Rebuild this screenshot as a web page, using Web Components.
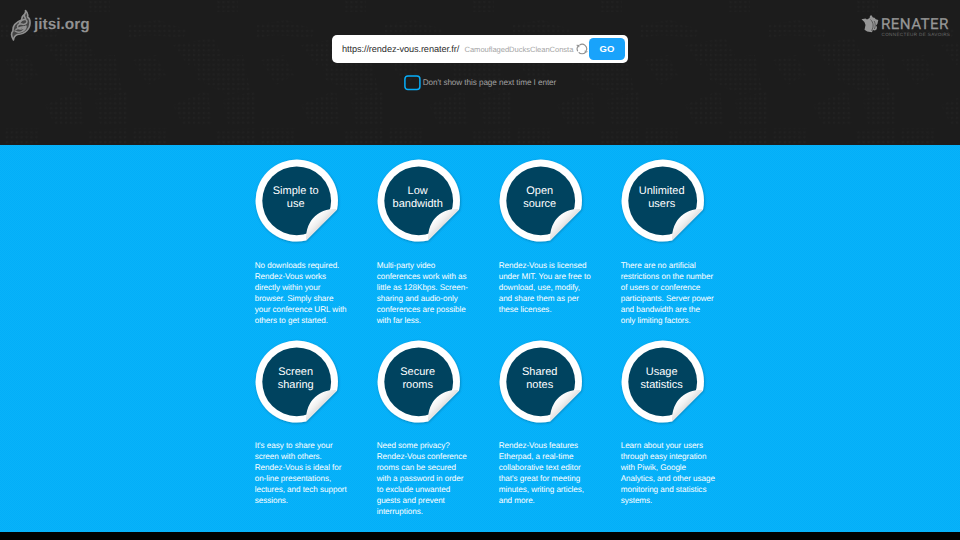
<!DOCTYPE html>
<html lang="en"><head><meta charset="utf-8"><title>Rendez-Vous</title>
<style>html,body{margin:0;height:540px;overflow:hidden;background:#000;text-rendering:geometricPrecision}</style></head>
<body>
<welcome-page></welcome-page>
<script>
const define=(name,html,setup)=>customElements.define(name,class extends HTMLElement{
  connectedCallback(){
    if(this.shadowRoot)return;
    const t=document.createElement('template');t.innerHTML=html;
    this.attachShadow({mode:'open'}).append(t.content.cloneNode(true));
    if(setup)setup.call(this);
  }
});

define('jitsi-logo',`<style>:host{display:flex;align-items:flex-start;color:#919191}svg{display:block;margin-top:0}span{font:bold 15.4px/20px "Liberation Sans",sans-serif;margin:6px 0 0 2.500px;white-space:nowrap}</style>
<svg width="22" height="32" viewBox="0 0 22 32" fill="none" stroke="#919191" stroke-linecap="round" stroke-linejoin="round">
<path d="M15.500 1.500c.8 3-1.500 4-3 6-.8 1.500-.5 2.500-1 3.500-5 2-9 6-8.500 11-2 2-2 5 .5 9 .3-3 1-4.500 4-5.500 8-.5 13-6 12.500-12.500 0-2-1-4-2.500-5 .8-2.500.2-4.500-2-6.500z" fill="#454545" stroke-width="1.600"/>
<path d="M9.500 14c3-5 7.500-4 7.500-1.500s-3 3.500-5.500 2.500c-3-.5-5 2-3.500 4s6 1 8-2M14.500 6c-1 2 2 3 1 4.500M5 22c4 3 10 0 11-4-4-1-7 1-10 2.500" stroke-width="1.500"/></svg><span>jitsi.org</span>`);

define('renater-logo',`<style>:host{display:grid;grid-template-columns:20.500px 69px;color:#969696}svg{display:block}div{padding-top:2.500px}b{display:block;font:400 15.200px/15px Roboto,"Liberation Sans",sans-serif;letter-spacing:.4px;-webkit-text-stroke:.25px #969696}small{display:block;font:4.600px/5px "Liberation Sans",sans-serif;letter-spacing:.35px;white-space:nowrap;color:#6a6a6a;margin:0 0 0 .5px}</style>
<svg width="18" height="18" viewBox="0 0 18 18"><path d="M.5 4.200L4.500 3.600 6 4.600 8.600 3 9 .8l1.500-.5 1.400 2.200 1.600.3 1.300 1.400 2.500.8-.9 4-1.400 1.500 1 1.400-.3 2.300-1.700 1.200-2.200-.4-.8 2.200-4.800-.8-2.700-1.700L4.500 10 3.400 7z" fill="#969696"/><path d="M9.500 4.500c3 3 3.500 7 1 11.300M13.200 6c1.400 3 1.400 5 .2 8" fill="none" stroke="#404040" stroke-width=".7"/></svg>
<div><b>RENATER</b><small>CONNECTEUR DE SAVOIRS</small></div>`);

define('room-form',`<style>:host{display:flex;box-sizing:border-box;width:296px;height:27.500px;background:#fff;border-radius:5px;padding:3px 3px 0 10px;align-items:flex-start;font-family:"Liberation Sans",sans-serif;white-space:nowrap}
.url{font-size:9.200px;letter-spacing:-.09px;line-height:23px;color:#2c2c2c;width:122.500px}.room{font-size:7.600px;letter-spacing:-.05px;line-height:24px;color:#a5a5a5;width:111px}svg{display:block;margin:5px 0 0 0}button{display:block;margin:0 0 0 auto;padding:0;border:0;width:36px;height:22px;border-radius:4.500px;background:#19a3fb;color:#fff;font:bold 9.500px/22px "Liberation Sans",sans-serif}</style>
<span class="url">https://rendez-vous.renater.fr/</span><span class="room">CamouflagedDucksCleanConsta</span>
<svg width="12" height="12" viewBox="0 0 12 12" fill="none" stroke="#8f8f8f" stroke-width="1.150"><path d="M1.700 8.200A4.700 4.700 0 0 1 2.500 2.700M3.600 1.900A4.700 4.700 0 0 1 10.300 7.800M9.500 9.300A4.700 4.700 0 0 1 2.700 9.300"/><path d="M.6 2.200L2.900 2.400 2.700 4.300M11.400 8.500L9.400 9.200 9.200 7.500"/></svg><button>GO</button>`);

define('skip-option',`<style>:host{display:flex;align-items:center;gap:2px;font:8.200px/15px "Liberation Sans",sans-serif;letter-spacing:-.088px;color:#a0a0a0;white-space:nowrap}svg{display:block}</style><svg width="17" height="16"><rect x=".9" y=".9" width="15" height="13.700" rx="3" fill="none" stroke="#07aefa" stroke-width="1.500"/></svg><span><slot></slot></span>`);

define('page-header',`<style>:host{display:grid;grid-template-columns:1fr 296px 1fr;height:145px;background:#1c1c1c;position:relative;box-sizing:border-box}
.map{position:absolute;inset:0;z-index:0}jitsi-logo{margin:9px 0 0 9.500px;z-index:1}renater-logo{justify-self:end;margin:14.500px 10px 0 0;z-index:1}.mid{display:flex;flex-direction:column;align-items:center;padding-top:35px;gap:12px;z-index:1}</style>
<svg class="map" width="960" height="145"><defs><pattern id="d" width="4.920" height="4.830" patternUnits="userSpaceOnUse"><circle cx="2" cy="2" r="1.200" fill="#202020"/></pattern>
<pattern id="m" width="128" height="145" patternUnits="userSpaceOnUse"><path fill="url(#d)" d="M0 25L30 20 60 30 55 38 20 35 0 38zM45 45L85 38 95 55 60 65zM65 60L115 55 122 90 100 95 70 80zM88 0H110V12H88zM5 60L28 55 38 75 20 85zM45 105L80 90 84 125 55 125zM95 100L128 90V125H100zM88 130L128 128V145H88zM5 128H40V145H5z"/></pattern></defs>
<rect width="960" height="145" fill="url(#m)"/></svg>
<jitsi-logo></jitsi-logo><div class="mid"><room-form></room-form><skip-option>Don't show this page next time I enter</skip-option></div><renater-logo></renater-logo>`);

define('feature-card',`<style>:host{display:block;color:#fff;font-family:"Liberation Sans",sans-serif}
.badge{display:grid;width:86px;height:86px}.badge>*{grid-area:1/1}svg{display:block;overflow:visible}h2{margin:25.200px 4px 0 0;font:11px/13px "Liberation Sans",sans-serif;text-align:center;white-space:pre;z-index:1}p{margin:13.500px 0 0;font-size:8.200px;letter-spacing:-.085px;line-height:11px;white-space:pre}</style>
<div class="badge"><svg width="86" height="86" viewBox="0 .5 86 86"><defs><linearGradient id="g" gradientUnits="userSpaceOnUse" x1="56" y1="54" x2="67" y2="65"><stop offset=".3" stop-color="#fff"/><stop offset=".7" stop-color="#f1f1f1"/><stop offset="1" stop-color="#e0e0e0"/></linearGradient><filter id="s" x="-10%" y="-10%" width="125%" height="125%"><feDropShadow dx=".6" dy=".8" stdDeviation=".8" flood-color="#034a70" flood-opacity=".45"/></filter></defs>
<path filter="url(#s)" d="M51 81A41.200 41 0 1 1 82 49.900z" fill="#fff"/><circle cx="41.700" cy="41.300" r="34.400" fill="#00435f"/><path d="M82.100 49.800C71 47.500 50 55.500 51 81.100z" fill="url(#g)"/></svg><h2><slot name="title"></slot></h2></div><p><slot></slot></p>`);

define('feature-grid',`<style>:host{display:grid;box-sizing:border-box;height:387px;padding:15px 0 0 254.700px;grid-template-columns:repeat(4,122px);grid-template-rows:180.500px 1fr;background:repeating-conic-gradient(#03aef9 0 25%,#09b3f8 0 50%) 0 0/2px 2px}</style><slot></slot>`);

define('welcome-page',`<style>:host{display:flex;flex-direction:column;width:960px;height:540px}</style><page-header></page-header><feature-grid></feature-grid>`,function(){
  const grid=this.shadowRoot.querySelector('feature-grid');
  [['Simple to\nuse','No downloads required.\nRendez-Vous works\ndirectly within your\nbrowser. Simply share\nyour conference URL with\nothers to get started.'],
  ['Low\nbandwidth','Multi-party video\nconferences work with as\nlittle as 128Kbps. Screen-\nsharing and audio-only\nconferences are possible\nwith far less.'],
  ['Open\nsource','Rendez-Vous is licensed\nunder MIT. You are free to\ndownload, use, modify,\nand share them as per\nthese licenses.'],
  ['Unlimited\nusers','There are no artificial\nrestrictions on the number\nof users or conference\nparticipants. Server power\nand bandwidth are the\nonly limiting factors.'],
  ['Screen\nsharing',"It's easy to share your\nscreen with others.\nRendez-Vous is ideal for\non-line presentations,\nlectures, and tech support\nsessions."],
  ['Secure\nrooms','Need some privacy?\nRendez-Vous conference\nrooms can be secured\nwith a password in order\nto exclude unwanted\nguests and prevent\ninterruptions.'],
  ['Shared\nnotes',"Rendez-Vous features\nEtherpad, a real-time\ncollaborative text editor\nthat's great for meeting\nminutes, writing articles,\nand more."],
  ['Usage\nstatistics','Learn about your users\nthrough easy integration\nwith Piwik, Google\nAnalytics, and other usage\nmonitoring and statistics\nsystems.']].forEach(([title,body])=>{
    const card=document.createElement('feature-card'),h=document.createElement('span');
    h.slot='title';h.style.whiteSpace='pre';h.textContent=title;card.append(h,body);grid.append(card);
  });
});
</script>
</body></html>
